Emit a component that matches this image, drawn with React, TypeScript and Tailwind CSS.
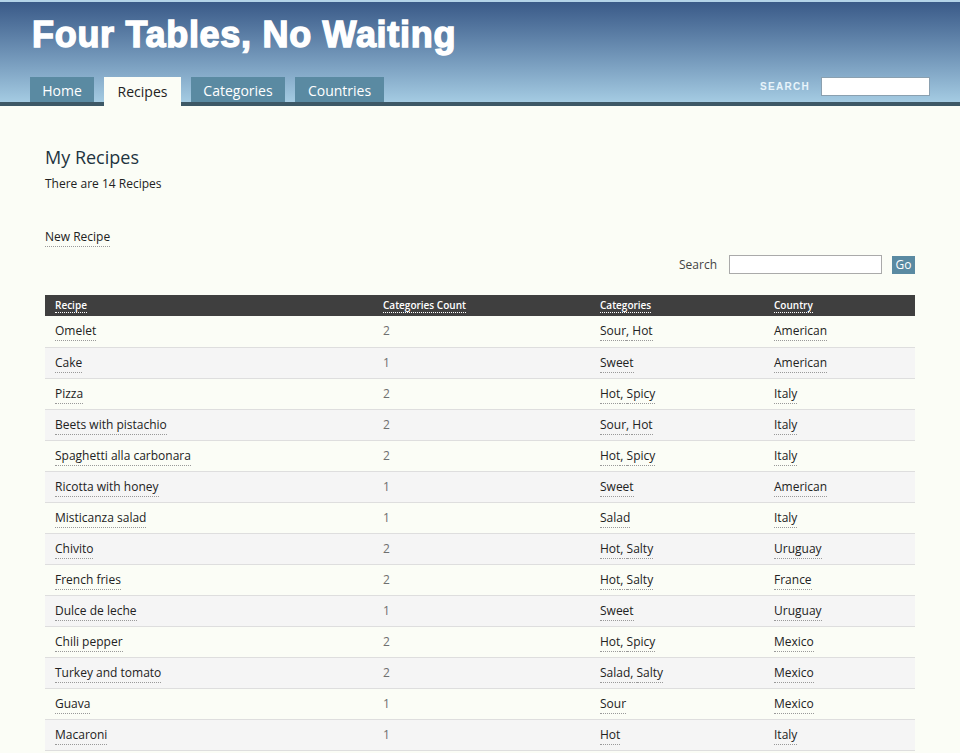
import React from "react";

const rows: [string, string, string[], string][] = [
  ["Omelet", "2", ["Sour", "Hot"], "American"],
  ["Cake", "1", ["Sweet"], "American"],
  ["Pizza", "2", ["Hot", "Spicy"], "Italy"],
  ["Beets with pistachio", "2", ["Sour", "Hot"], "Italy"],
  ["Spaghetti alla carbonara", "2", ["Hot", "Spicy"], "Italy"],
  ["Ricotta with honey", "1", ["Sweet"], "American"],
  ["Misticanza salad", "1", ["Salad"], "Italy"],
  ["Chivito", "2", ["Hot", "Salty"], "Uruguay"],
  ["French fries", "2", ["Hot", "Salty"], "France"],
  ["Dulce de leche", "1", ["Sweet"], "Uruguay"],
  ["Chili pepper", "2", ["Hot", "Spicy"], "Mexico"],
  ["Turkey and tomato", "2", ["Salad", "Salty"], "Mexico"],
  ["Guava", "1", ["Sour"], "Mexico"],
  ["Macaroni", "1", ["Hot"], "Italy"],
];

const link = "border-b border-dotted border-[#999] pb-[1px]";

export default function App() {
  return (
    <div className="min-h-[753px] bg-[#fbfdf6] text-[#333] font-['Open_Sans',sans-serif]">
      <header className="border-t-2 border-[#b3d3e8] bg-gradient-to-b from-[#3a5a88] to-[#a9d0e6]">
        <div className="h-[75px] pl-[32px] pt-[10px]">
          <h1 className="text-[36px] leading-[46px] font-bold text-white tracking-[0.7px] font-['Liberation_Sans',sans-serif] [-webkit-text-stroke:1.4px_white]">
            Four Tables, No Waiting
          </h1>
        </div>
        <div className="flex items-end justify-between border-b-4 border-[#3d5866] pl-[30px] pr-[30px]">
          <nav className="flex gap-[10px] -mb-[4px]">
            <a className="h-[25px] w-[64px] flex items-center justify-center bg-[#5a8aa2] text-white text-[14px] mb-[4px] pt-[1px]">Home</a>
            <a className="h-[29px] w-[77px] flex items-start pt-[4px] justify-center bg-[#fbfdf6] text-[#222] text-[14px]">Recipes</a>
            <a className="h-[25px] w-[94px] flex items-center justify-center bg-[#5a8aa2] text-white text-[14px] mb-[4px] pt-[1px]">Categories</a>
            <a className="h-[25px] w-[89px] flex items-center justify-center bg-[#5a8aa2] text-white text-[14px] mb-[4px] pt-[1px]">Countries</a>
          </nav>
          <div className="flex items-center gap-[11px] pb-[6px]">
            <span className="text-[10px] font-bold tracking-[1.3px] text-[#e8f4fb] font-['Liberation_Sans',sans-serif]">SEARCH</span>
            <input className="h-[19px] w-[109px] bg-white border border-[#8aa0b0]" />
          </div>
        </div>
      </header>

      <main className="px-[45px] pt-[39px]">
        <h2 className="text-[18px] leading-[24px] text-[#1e3440]">My Recipes</h2>
        <p className="mt-[6px] text-[12px] text-[#222]">There are 14 Recipes</p>
        <p className="mt-[35px] text-[12px] text-[#222]">
          <a className={link}>New Recipe</a>
        </p>
        <div className="mt-[9px] flex items-center justify-end gap-[10px] text-[12px] text-[#444]">
          <span className="mr-[2px]">Search</span>
          <input className="h-[19px] w-[153px] bg-white border border-[#aaa]" />
          <button className="h-[18px] w-[23px] bg-[#5a8aa2] text-white text-[12px] leading-[18px]">Go</button>
        </div>
        <table className="mt-[21px] w-full border-collapse text-[12px]">
          <thead>
            <tr className="bg-[#3f3f3f] text-white text-[10px] font-semibold h-[21px]">
              <th className="w-[338px] pl-[10px] text-left font-semibold"><span className="border-b border-dotted border-white">Recipe</span></th>
              <th className="w-[217px] text-left font-semibold"><span className="border-b border-dotted border-white">Categories Count</span></th>
              <th className="w-[174px] text-left font-semibold"><span className="border-b border-dotted border-white">Categories</span></th>
              <th className="text-left font-semibold"><span className="border-b border-dotted border-white">Country</span></th>
            </tr>
          </thead>
          <tbody>
            {rows.map((r, i) => (
              <tr key={r[0]} className={`h-[31px] border-b border-[#dedede] ${i % 2 === 1 ? "bg-[#f5f5f5]" : ""}`}>
                <td className="pl-[10px] text-[#222]"><a className={link}>{r[0]}</a></td>
                <td className="text-[#6f6f6f]">{r[1]}</td>
                <td className="text-[#222]">
                  {r[2].map((c, j) => (
                    <span key={c}>
                      <a className={link}>{c}</a>
                      {j < r[2].length - 1 ? <span className={link}>, </span> : null}
                    </span>
                  ))}
                </td>
                <td className="text-[#222]"><a className={link}>{r[3]}</a></td>
              </tr>
            ))}
          </tbody>
        </table>
      </main>
    </div>
  );
}
